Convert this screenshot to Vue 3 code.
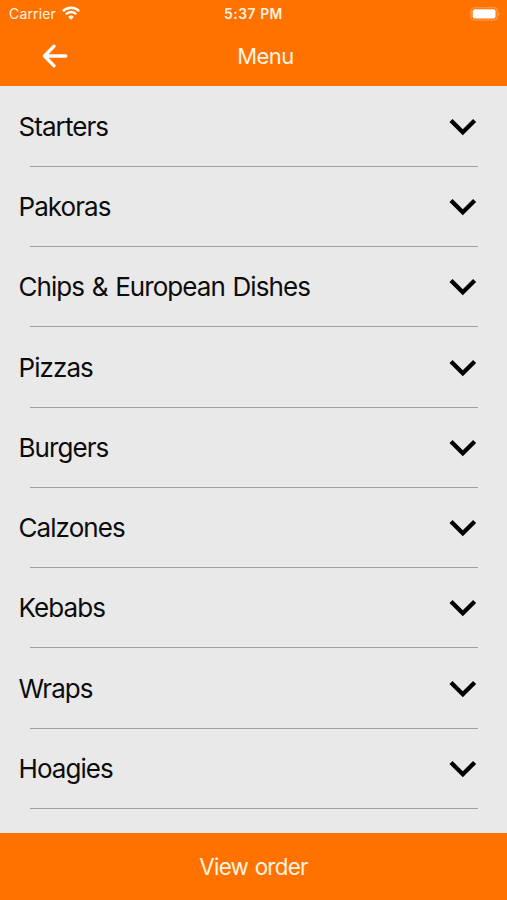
<script setup>
const categories = [
  'Starters',
  'Pakoras',
  'Chips & European Dishes',
  'Pizzas',
  'Burgers',
  'Calzones',
  'Kebabs',
  'Wraps',
  'Hoagies',
]
</script>

<template>
  <div class="screen">
    <header class="header">
      <div class="status">
        <div class="network">
          <span class="carrier">Carrier</span>
          <svg class="wifi" width="18" height="14" viewBox="0 0 18 14" fill="none" stroke="#fff" stroke-width="2.3">
            <path d="M0.9 5.1a11.5 11.5 0 0 1 16.2 0" />
            <path d="M3.8 8.2a7.3 7.3 0 0 1 10.4 0" />
            <path d="M9 13.7L6.2 10.9a4 4 0 0 1 5.6 0Z" fill="#fff" stroke="none" />
          </svg>
        </div>
        <span class="time">5:37 PM</span>
        <div class="power">
          <svg width="31" height="14" viewBox="0 0 31 14">
            <rect x="1" y="0.8" width="26.200" height="12.2" rx="3.5" fill="none" stroke="#ffa04e" stroke-width="1.1" />
            <rect x="2.7" y="2.3" width="22.800" height="9.2" rx="2" fill="#fff" />
            <path d="M28.500 5q2 1.900 0 4z" fill="#ffb56e" />
          </svg>
        </div>
      </div>
      <nav class="navbar">
        <button class="back" aria-label="Back">
          <svg width="26" height="24" viewBox="0 0 26 24" fill="none" stroke="#fff" stroke-width="3.3" stroke-linecap="round" stroke-linejoin="round">
            <path d="M12 2.200L2.500 12L12 21.800M3 12H23.800" />
          </svg>
        </button>
        <h1 class="title">Menu</h1>
      </nav>
    </header>
    <main class="list">
      <div v-for="name in categories" :key="name" class="row">
        <div class="row-main">
          <span class="name">{{ name }}</span>
          <svg width="28" height="18" viewBox="0 0 28 18" fill="none" stroke="#000" stroke-width="4.3">
            <path d="M2 2.500L13.800 14.300L25.600 2.500" />
          </svg>
        </div>
        <div class="divider"></div>
      </div>
    </main>
    <button class="order">View order</button>
  </div>
</template>

<style>
body {
  margin: 0;
}
</style>

<style scoped>
.screen {
  display: flex;
  flex-direction: column;
  width: 507px;
  height: 900px;
  overflow: hidden;
  background: #e9e9e9;
  font-family: Inter, "Liberation Sans", sans-serif;
  color: #0c0c0c;
}
svg {
  display: block;
  flex: none;
}
button {
  border: 0;
  padding: 0;
  background: none;
  font-family: inherit;
}
.header {
  flex: none;
  height: 86px;
  background: #ff7200;
  color: #fff3e2;
}
.status {
  display: grid;
  grid-template-columns: 1fr auto 1fr;
  align-items: center;
  height: 27px;
  padding: 0 6px;
}
.network {
  display: flex;
  align-items: center;
  gap: 6px;
  padding-left: 3px;
}
.carrier {
  font-size: 14px;
  line-height: 20px;
  letter-spacing: 0.15px;
}
.wifi {
  margin-top: -2px;
}
.time {
  font-size: 13.8px;
  font-weight: 600;
  line-height: 20px;
  letter-spacing: 0.55px;
}
.power {
  display: flex;
  justify-content: flex-end;
}
.navbar {
  display: grid;
  grid-template-columns: 1fr auto 1fr;
  align-items: center;
  height: 58px;
}
.back {
  justify-self: start;
  margin-left: 42px;
}
.title {
  grid-column: 2;
  margin: 0 0 0 24px;
  font-size: 22px;
  font-weight: 400;
  line-height: 30px;
  letter-spacing: -0.5px;
}
.list {
  flex: 1;
  min-height: 0;
  overflow: hidden;
}
.row {
  height: 80.22px;
}
.row-main {
  display: flex;
  align-items: center;
  justify-content: space-between;
  box-sizing: border-box;
  height: 80px;
  padding: 2px 30px 0 18.5px;
}
.name {
  font-size: 26px;
  line-height: 32px;
  letter-spacing: -0.93px;
  word-spacing: 1.2px;
}
.divider {
  height: 1px;
  margin: 0 29px 0 30px;
  background: #a0a0a0;
}
.order {
  flex: none;
  height: 67px;
  background: #ff7200;
  color: #fff3e2;
  font-size: 22.4px;
  line-height: 30px;
  letter-spacing: -0.7px;
  word-spacing: 0.8px;
}
</style>
